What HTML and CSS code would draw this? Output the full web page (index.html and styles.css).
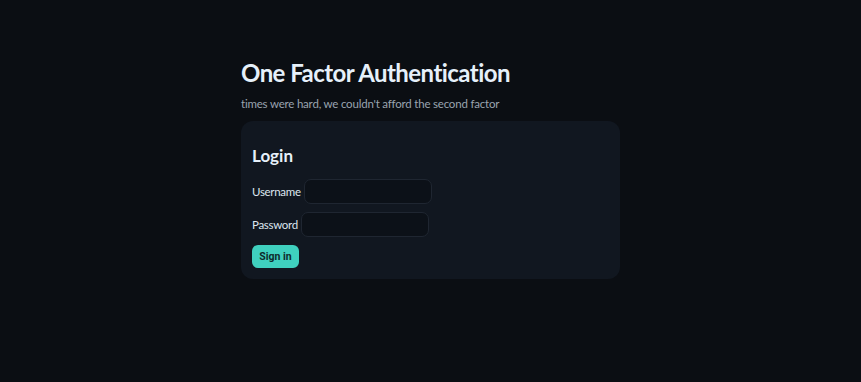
FILE: index.html
```html
<!DOCTYPE html>
<html lang="en">
<head>
    <meta charset="UTF-8">
    <meta name="viewport" content="width=device-width, initial-scale=1.0">
    <title>One Factor Authentication</title>
    <link rel="stylesheet" href="styles.css">
</head>
<body>
    <div class="container">
        <h1>One Factor Authentication</h1>
        <p class="tagline">times were hard, we couldn't afford the second factor</p>

        <form class="card" onsubmit="return false;">
            <h2>Login</h2>
            <div class="form-group">
                <label for="username">Username</label>
                <input type="text" id="username">
            </div>
            <div class="form-group">
                <label for="password">Password</label>
                <input type="password" id="password">
            </div>
            <button type="submit">Sign in</button>
        </form>
    </div>
</body>
</html>
```

FILE: styles.css
```css
body {
    margin: 0;
    background-color: #0b0e13;
    color: #e6edf3;
    font-family: Lato, "Noto Sans", sans-serif;
}
.container {
    width: 379px;
    margin: 0 auto;
    padding-top: 57px;
}
h1 {
    margin: 0;
    font-size: 24px;
    font-weight: 700;
    line-height: 32px;
    letter-spacing: -0.55px;
    color: #e6f0fa;
}
.tagline {
    margin: 7px 0 9px;
    font-size: 11.5px;
    line-height: 16px;
    letter-spacing: -0.2px;
    color: #9aa4b0;
}
.card {
    background-color: #111720;
    border-radius: 12px;
    padding: 22px 11px 11px;
}
h2 {
    margin: 0 0 10px;
    font-size: 17px;
    font-weight: 700;
    line-height: 26px;
    color: #e6f0fa;
}
.form-group {
    display: flex;
    align-items: center;
    gap: 3px;
    margin-bottom: 8px;
}
.form-group + .form-group {
    margin-bottom: 7px;
}
label {
    font-size: 11.5px;
    letter-spacing: -0.3px;
    color: #dde5ee;
}
input {
    width: 128px;
    height: 25px;
    box-sizing: border-box;
    padding: 4px 8px;
    background-color: #0c1118;
    border: 1px solid #1f2631;
    border-radius: 7px;
    color: #e6edf3;
}
button {
    width: 47px;
    height: 23px;
    padding: 0;
    font-family: Roboto, "Liberation Sans", sans-serif;
    font-size: 10.5px;
    font-weight: 700;
    background-color: #3fd0be;
    color: #0e2b2c;
    border: none;
    border-radius: 6px;
    cursor: pointer;
}
```
